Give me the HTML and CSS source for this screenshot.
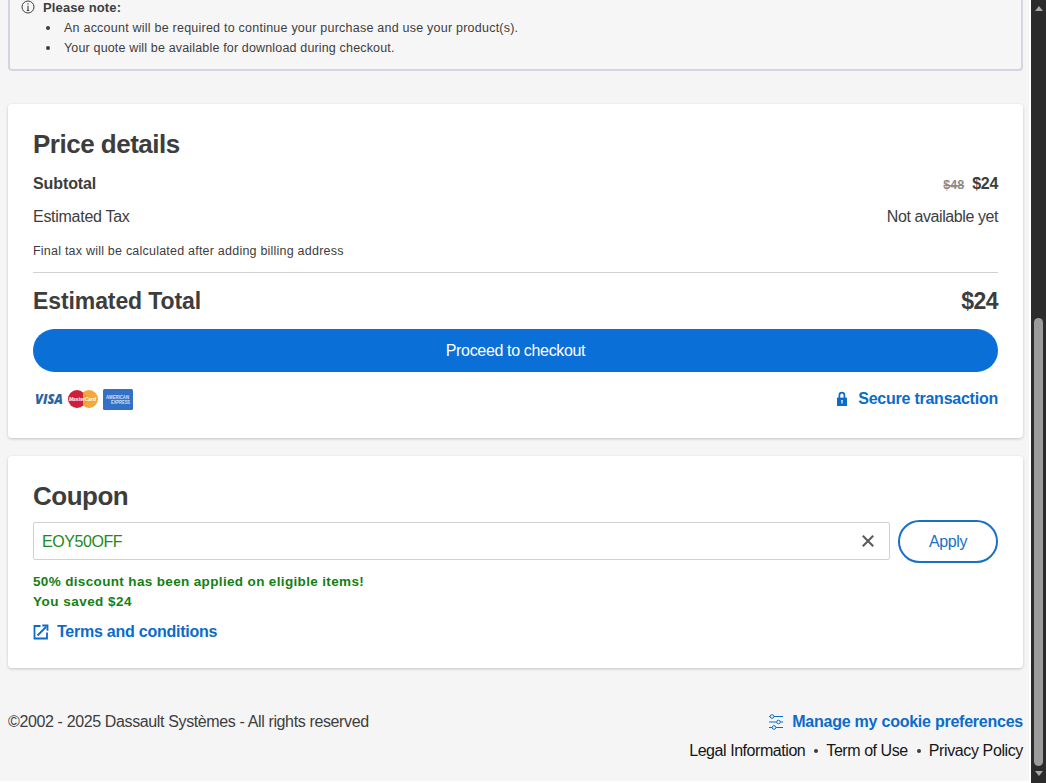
FILE: index.html
```html
<!DOCTYPE html>
<html lang="en">
<head>
    <meta charset="UTF-8">
    <meta name="viewport" content="width=device-width, initial-scale=1">
    <title>Cart</title>
    <link rel="stylesheet" href="styles.css">
</head>
<body>
    <div class="page">
        <div class="note">
            <svg class="info-icon" width="14" height="14" viewBox="0 0 14 14">
                <circle cx="7" cy="7" r="6" fill="none" stroke="#3d3d3d" stroke-width="1"/>
                <path d="M7 3.2v1.3M7 5.8v4.8M5.8 10.5h2.4" stroke="#3d3d3d" stroke-width="1.1"/>
            </svg>
            <div class="note-text">
                <strong class="note-title">Please note:</strong>
                <ul>
                    <li><span class="note-line1">An account will be required to continue your purchase and use your product(s).</span></li>
                    <li><span class="note-line2">Your quote will be available for download during checkout.</span></li>
                </ul>
            </div>
        </div>

        <div class="card price">
            <h2 class="price-title">Price details</h2>
            <div class="row subtotal">
                <span>Subtotal</span>
                <span class="amount"><s>$48</s>$24</span>
            </div>
            <div class="row tax">
                <span class="tax-label">Estimated Tax</span>
                <span class="tax-value">Not available yet</span>
            </div>
            <p class="tax-note">Final tax will be calculated after adding billing address</p>
            <div class="row total">
                <span class="total-label">Estimated Total</span>
                <span class="total-value">$24</span>
            </div>
            <button class="checkout">Proceed to checkout</button>
            <div class="row payment">
                <div class="logos">
                    <svg width="30" height="20" viewBox="0 0 30 20">
                        <text class="visa" x="2" y="14.8" textLength="28" lengthAdjust="spacingAndGlyphs">VISA</text>
                    </svg>
                    <svg width="32" height="20" viewBox="0 0 32 20">
                        <circle cx="22" cy="10" r="9" fill="#f2a83a"/>
                        <circle cx="10" cy="10" r="9" fill="#cf1f3a"/>
                        <path d="M16 3.3a9 9 0 0 1 0 13.4" fill="#f2a83a"/>
                        <text class="mastercard" x="2" y="12.3" textLength="27" lengthAdjust="spacingAndGlyphs">MasterCard</text>
                    </svg>
                    <svg width="30" height="21" viewBox="0 0 30 21">
                        <rect width="30" height="21" rx="1.5" fill="#3470c6"/>
                        <text class="amex" x="3" y="10" textLength="23" lengthAdjust="spacingAndGlyphs">AMERICAN</text>
                        <text class="amex" x="8" y="15" textLength="19" lengthAdjust="spacingAndGlyphs">EXPRESS</text>
                    </svg>
                </div>
                <div class="secure">
                    <svg width="12" height="16" viewBox="0 0 12 16">
                        <path d="M3.4 7V4.2a2.5 2.5 0 0 1 5 0V7" fill="none" stroke="#0b6bcb" stroke-width="1.7"/>
                        <path d="M1 6.6h10V15H1z" fill="#0b6bcb"/>
                        <path d="M6 9v3.4M5.2 9.8h1.6" stroke="#fff" stroke-width="1.1"/>
                    </svg>
                    <span>Secure transaction</span>
                </div>
            </div>
        </div>

        <div class="card coupon">
            <h2 class="coupon-title">Coupon</h2>
            <div class="coupon-form">
                <div class="field">
                    <span class="code">EOY50OFF</span>
                    <svg width="14" height="14" viewBox="0 0 14 14">
                        <path d="M1.8 1.8l10.4 10.4M12.2 1.8L1.8 12.2" stroke="#5c5c5c" stroke-width="2.1"/>
                    </svg>
                </div>
                <button class="apply">Apply</button>
            </div>
            <div class="success">
                <p class="discount">50% discount has been applied on eligible items!</p>
                <p class="saved">You saved $24</p>
            </div>
            <a class="terms">
                <svg width="16" height="16" viewBox="0 0 16 16">
                    <path d="M7.5 2H1.5v12.5H14V8.5M4.5 11.5L13 3M9.3 1.5h5.2v5.2" fill="none" stroke="#0b6bcb" stroke-width="1.8"/>
                </svg>
                <span>Terms and conditions</span>
            </a>
        </div>

        <div class="footer">
            <span class="copyright">©2002 - 2025 Dassault Systèmes - All rights reserved</span>
            <div class="footer-right">
                <a class="cookies">
                    <svg width="16" height="16" viewBox="0 0 16 16" fill="none" stroke="#0b6bcb" stroke-width="1">
                        <path d="M1 2.5h1M6 2.5h9M1 8h7.5M12.5 8H15M1 13.5h3M8 13.5h7"/>
                        <circle cx="4" cy="2.5" r="1.8"/>
                        <circle cx="10.5" cy="8" r="1.8"/>
                        <circle cx="6" cy="13.5" r="1.8"/>
                    </svg>
                    <span>Manage my cookie preferences</span>
                </a>
                <div class="links">
                    <a class="legal">Legal Information</a>
                    <i class="dot"></i>
                    <a class="term">Term of Use</a>
                    <i class="dot"></i>
                    <a class="privacy">Privacy Policy</a>
                </div>
            </div>
        </div>
    </div>

    <div class="scrollbar">
        <i class="arrow-up"></i>
        <div class="thumb"></div>
        <i class="arrow-down"></i>
    </div>
</body>
</html>
```
FILE: styles.css
```css
* {
    box-sizing: border-box;
}

body {
    margin: 0;
    height: 783px;
    overflow: hidden;
    display: flex;
    background: #fff;
    color: #3d3d3d;
    font-family: "Liberation Sans", Arial, sans-serif;
    font-size: 16px;
}

h2, p, ul {
    margin: 0;
    padding: 0;
}

svg {
    display: block;
    flex: none;
    overflow: visible;
}

button {
    font-family: inherit;
    font-size: 16px;
    padding: 0;
}

.page {
    width: 1029px;
    height: 781px;
    padding: 0 6px 0 8px;
    background: #f5f5f5;
}

.note {
    height: 71px;
    display: flex;
    gap: 8px;
    padding-left: 11px;
    border: 2px solid #d5d5df;
    border-top: 0;
    border-radius: 0 0 4px 4px;
    background: #f6f6f7;
    font-size: 12.5px;
    line-height: 20px;
}

.note-text {
    margin-top: -2px;
}

.note-title {
    display: block;
    font-size: 13px;
    letter-spacing: 0.13px;
}

.note ul {
    padding-left: 21px;
    list-style: none;
}

.note li {
    display: flex;
    align-items: center;
}

.note li::before {
    content: "";
    width: 4px;
    height: 4px;
    margin: 0 14px 0 -18px;
    border-radius: 50%;
    background: #3d3d3d;
}

.note-line1 {
    letter-spacing: 0.23px;
}

.note-line2 {
    letter-spacing: 0.16px;
}

.card {
    padding: 0 25px;
    border-radius: 4px;
    background: #fff;
    box-shadow: 0 1px 3px rgba(0, 0, 0, 0.2);
}

.card h2 {
    font-size: 26px;
    line-height: 32px;
    letter-spacing: -0.5px;
}

.row {
    display: flex;
    justify-content: space-between;
    align-items: center;
}

.price {
    height: 334px;
    margin-top: 33px;
    padding-top: 24px;
}

.subtotal {
    height: 24px;
    margin-top: 11px;
    padding-top: 1px;
    font-weight: bold;
    letter-spacing: -0.1px;
}

.amount {
    letter-spacing: -0.3px;
}

.amount s {
    margin-right: 8px;
    color: #8b8b8b;
    font-size: 12.5px;
    letter-spacing: 0;
}

.tax {
    height: 24px;
    margin-top: 10px;
}

.tax-label {
    letter-spacing: -0.28px;
}

.tax-value {
    letter-spacing: -0.42px;
}

.tax-note {
    height: 44px;
    padding-top: 12px;
    border-bottom: 1px solid #d1d1d1;
    font-size: 12.5px;
    line-height: 20px;
    letter-spacing: 0.22px;
}

.total {
    height: 56px;
    font-size: 23px;
    font-weight: bold;
    letter-spacing: -0.1px;
}

.total-value {
    letter-spacing: -0.5px;
}

.checkout {
    width: 100%;
    height: 43px;
    border: 0;
    border-radius: 22px;
    background: #0a6fd6;
    color: #fff;
    letter-spacing: -0.34px;
}

.payment {
    height: 54px;
}

.logos {
    display: flex;
    align-items: center;
    gap: 4px;
}

.visa {
    font: italic 800 14px "Open Sans", sans-serif;
    fill: #2d62a3;
}

.mastercard {
    font: italic bold 6px "Liberation Sans", sans-serif;
    fill: #fff;
}

.amex {
    font: bold 5.5px "Liberation Sans", sans-serif;
    fill: #cfe0f8;
}

.secure, .terms, .cookies {
    display: flex;
    align-items: center;
    color: #0b6bcb;
    font-weight: bold;
    letter-spacing: -0.24px;
}

.secure {
    gap: 10px;
}

.coupon {
    height: 212px;
    margin-top: 18px;
    padding-top: 24px;
}

.coupon-form {
    display: flex;
    align-items: flex-start;
    gap: 8px;
    margin-top: 8px;
}

.field {
    flex: 1;
    height: 38px;
    margin-top: 2px;
    display: flex;
    align-items: center;
    justify-content: space-between;
    padding: 0 14px 0 8px;
    border: 1px solid #d1d1d1;
    border-radius: 2px;
    color: #1b8a1b;
    letter-spacing: -0.42px;
}

.code {
    padding-top: 2px;
}

.apply {
    width: 100px;
    height: 43px;
    border: 2px solid #1a70c4;
    border-radius: 22px;
    background: #fff;
    color: #1a70c4;
    letter-spacing: -0.4px;
}

.success {
    margin-top: 9px;
    color: #138013;
    font-size: 13.5px;
    font-weight: bold;
    line-height: 20px;
}

.discount {
    letter-spacing: 0.35px;
}

.saved {
    letter-spacing: 0.48px;
}

.terms {
    gap: 8px;
    height: 20px;
    margin-top: 10px;
}

.footer {
    display: flex;
    justify-content: space-between;
    padding-top: 44px;
}

.copyright {
    line-height: 20px;
    letter-spacing: -0.37px;
}

.footer-right {
    display: flex;
    flex-direction: column;
    align-items: flex-end;
    gap: 9px;
    line-height: 20px;
}

.cookies {
    gap: 8px;
}

.links {
    display: flex;
    align-items: center;
    color: #161616;
    letter-spacing: -0.44px;
}

.privacy {
    letter-spacing: -0.38px;
}

.dot {
    width: 4px;
    height: 4px;
    margin: 0 8px 0 9px;
    border-radius: 50%;
    background: #3d3d3d;
}

.scrollbar {
    width: 15px;
    height: 783px;
    margin-left: 2px;
    display: flex;
    flex-direction: column;
    align-items: center;
    background: #2b2b2b;
}

.arrow-up {
    margin-top: 6px;
    border: 4px solid transparent;
    border-top: 0;
    border-bottom: 5px solid #a8a8a8;
}

.thumb {
    width: 9px;
    height: 448px;
    margin-top: 307px;
    border-radius: 5px;
    background: #9b9b9b;
}

.arrow-down {
    margin-top: 5px;
    border: 4px solid transparent;
    border-bottom: 0;
    border-top: 5px solid #a8a8a8;
}
```
